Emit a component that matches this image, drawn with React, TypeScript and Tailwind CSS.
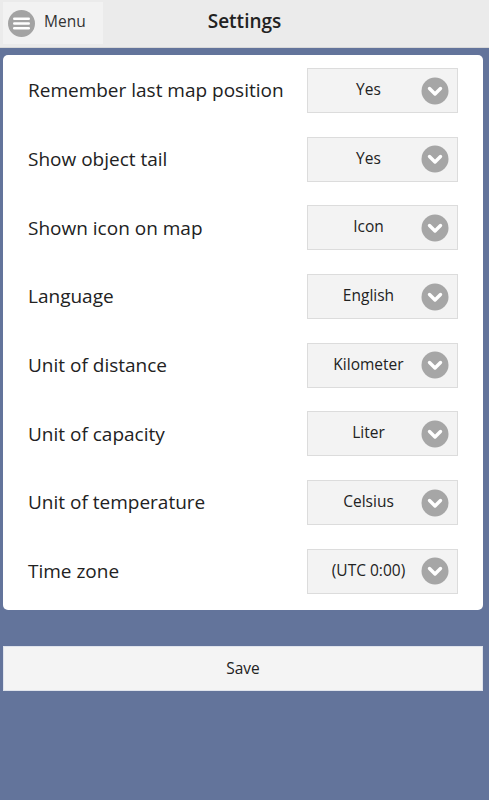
import React from "react";

const rows: [string, string][] = [
  ["Remember last map position", "Yes"],
  ["Show object tail", "Yes"],
  ["Shown icon on map", "Icon"],
  ["Language", "English"],
  ["Unit of distance", "Kilometer"],
  ["Unit of capacity", "Liter"],
  ["Unit of temperature", "Celsius"],
  ["Time zone", "(UTC 0:00)"],
];

function Chevron() {
  return (
    <svg width="28" height="28" viewBox="0 0 28 28">
      <circle cx="14" cy="14" r="13.5" fill="#a6a6a6" />
      <path d="M8.5 11.5 L14 17 L19.5 11.5" stroke="#fff" strokeWidth="3.4" fill="none" strokeLinecap="round" strokeLinejoin="round" />
    </svg>
  );
}

function Burger() {
  return (
    <svg width="27" height="27" viewBox="0 0 27 27">
      <circle cx="13.5" cy="13.5" r="13.5" fill="#a3a3a3" />
      <rect x="5" y="7.5" width="17" height="2.6" rx="1.3" fill="#fff" />
      <rect x="5" y="12.2" width="17" height="2.6" rx="1.3" fill="#fff" />
      <rect x="5" y="16.9" width="17" height="2.6" rx="1.3" fill="#fff" />
    </svg>
  );
}

export default function App() {
  return (
    <div
      className="w-[489px] h-[800px] bg-[#63749b] flex flex-col text-[#222]"
      style={{ fontFamily: '"Open Sans", "Noto Sans", sans-serif' }}
    >
      <div className="h-[48px] bg-[#ebebeb] relative flex items-center justify-center border-b border-[#d8d8d8]">
        <div className="absolute left-[3px] top-[2px] w-[100px] h-[42px] bg-[#f2f2f2] flex items-center pl-[5px] gap-[9px]">
          <Burger />
          <span className="text-[15.5px] text-[#333] -mt-[3px]">Menu</span>
        </div>
        <span className="text-[19px] font-semibold text-[#222] -mt-[5px]">Settings</span>
      </div>
      <div className="ml-[3px] mr-[6px] mt-[7px] bg-white rounded-[5px] pt-[13px] pb-[16px] flex flex-col gap-[23.7px]">
        {rows.map(([label, value]) => (
          <div key={label} className="flex items-center h-[45px]">
            <div className="pl-[25px] flex-1 text-[19px] text-[#222]">{label}</div>
            <div className="w-[151px] h-[45px] mr-[25px] bg-[#f3f3f3] border border-[#dcdcdc] flex items-center">
              <div className="flex-1 text-center text-[15.5px] text-[#222] pl-[8px] -mt-[2px]">{value}</div>
              <div className="mr-[8px] flex items-center">
                <Chevron />
              </div>
            </div>
          </div>
        ))}
      </div>
      <div className="ml-[3px] mr-[6px] mt-[36px] h-[45px] bg-[#f4f4f4] border border-[#dfe3ec] flex items-center justify-center text-[15.5px] text-[#222]">
        Save
      </div>
    </div>
  );
}
